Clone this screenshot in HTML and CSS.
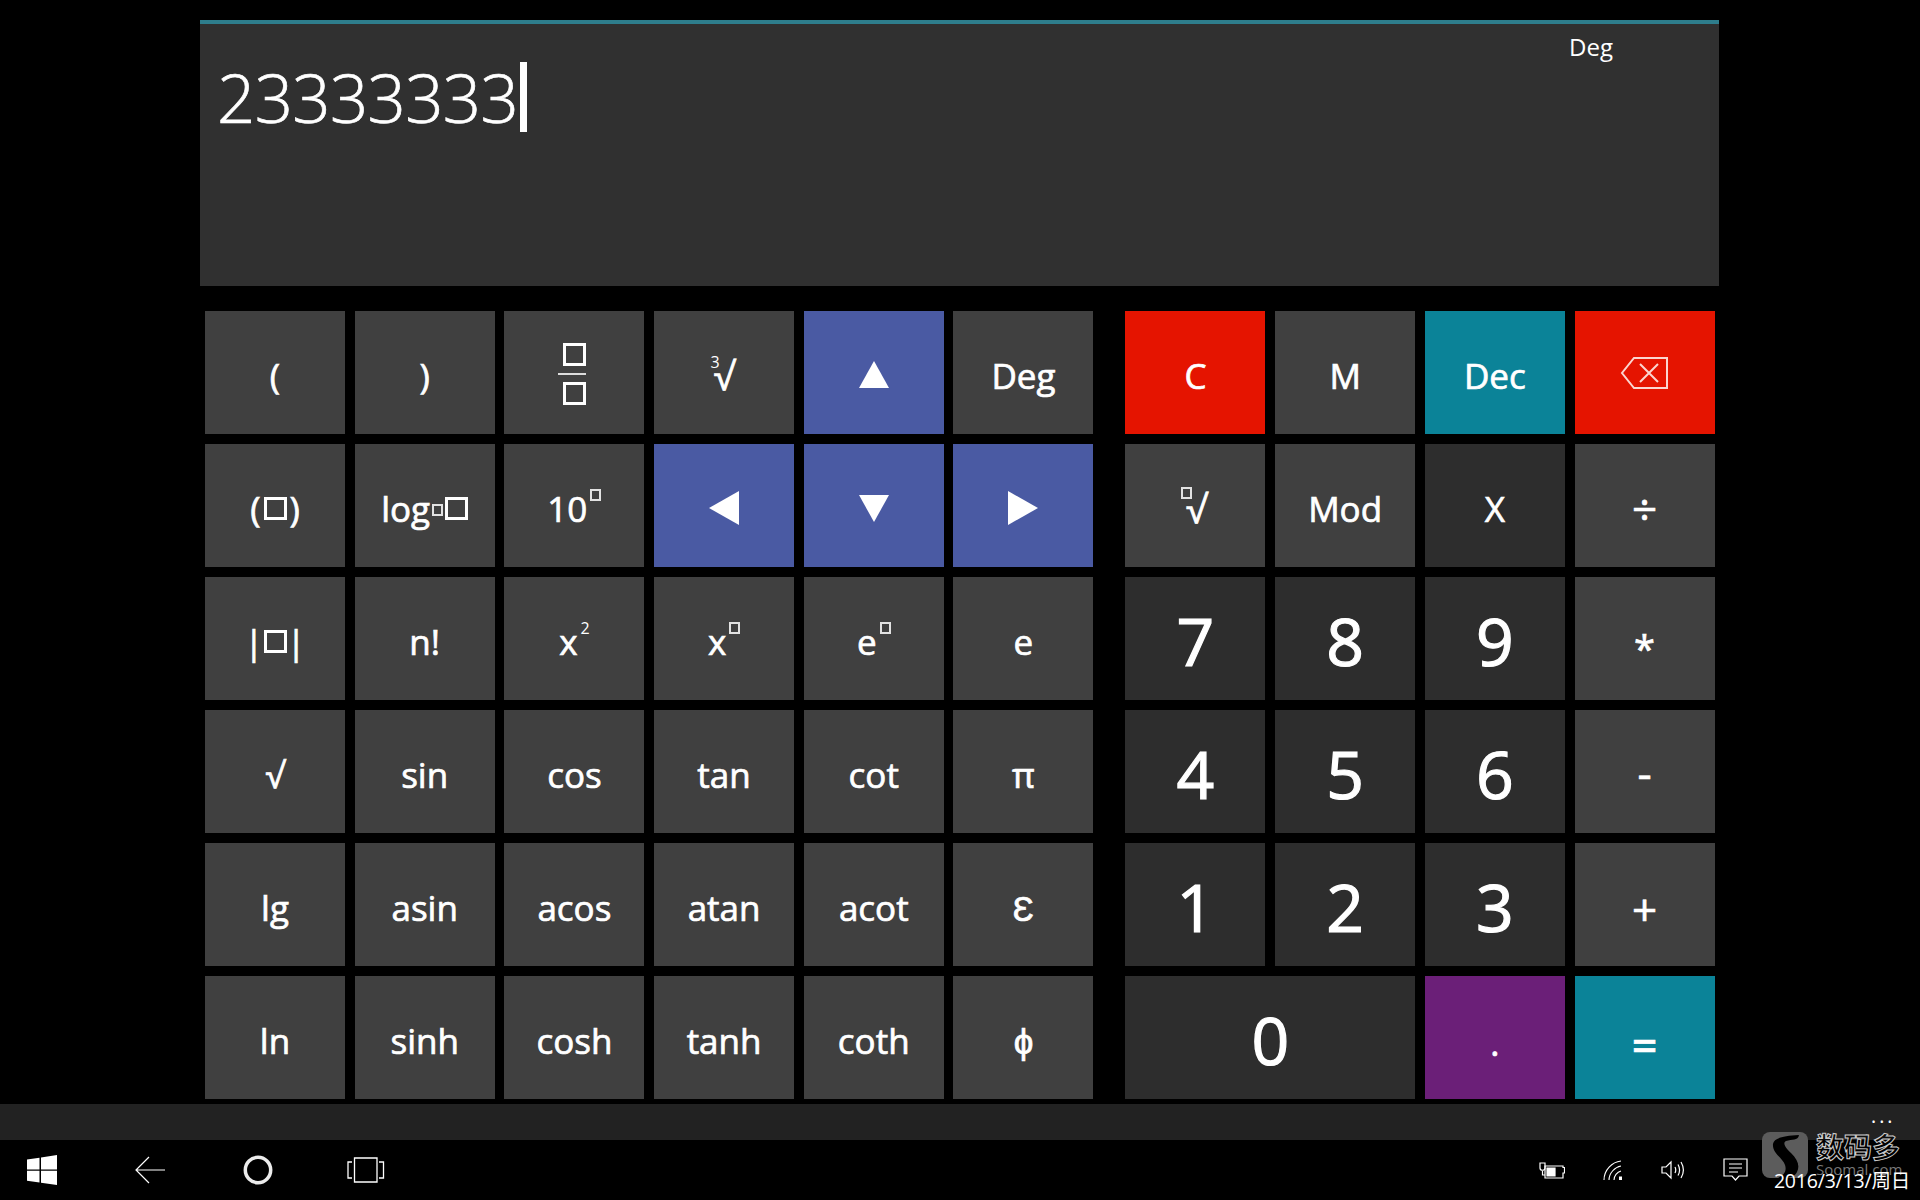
FILE: index.html
```html
<!DOCTYPE html>
<html lang="en">

<head>
    <meta charset="UTF-8">
    <title>Calculator</title>
    <link rel="stylesheet" href="styles.css">
</head>

<body>
    <!--display-->
    <div class="display">
        <div class="entry">23333333<span class="caret"></span></div>
        <div class="mode">Deg</div>
    </div>

    <div class="pad">
        <!--functions-->
        <div class="keys fn">
            <div class="key">(</div>
            <div class="key">)</div>
            <div class="key"><div class="frac"><span class="box"></span><span class="frac-line"></span><span class="box"></span></div></div>
            <div class="key"><span class="root-idx">3</span><span class="rad">√</span></div>
            <div class="key blue"><svg class="tri" width="30" height="28" viewBox="0 0 30 28"><path d="M15 0 30 27H0z"/></svg></div>
            <div class="key">Deg</div>

            <div class="key">(<span class="box spaced"></span>)</div>
            <div class="key">log<span class="box mini low"></span><span class="box"></span></div>
            <div class="key">10<span class="box mini up"></span></div>
            <div class="key blue"><svg class="tri" width="30" height="34" viewBox="0 0 30 34"><path d="M30 0V34L0 17z"/></svg></div>
            <div class="key blue"><svg class="tri" width="30" height="28" viewBox="0 0 30 28"><path d="M0 1H30L15 28z"/></svg></div>
            <div class="key blue"><svg class="tri" width="30" height="34" viewBox="0 0 30 34"><path d="M0 0V34L30 17z"/></svg></div>

            <div class="key">|<span class="box"></span>|</div>
            <div class="key">n!</div>
            <div class="key">x<span class="sup">2</span></div>
            <div class="key">x<span class="box mini up"></span></div>
            <div class="key">e<span class="box mini up"></span></div>
            <div class="key">e</div>

            <div class="key">√</div>
            <div class="key">sin</div>
            <div class="key">cos</div>
            <div class="key">tan</div>
            <div class="key">cot</div>
            <div class="key">π</div>

            <div class="key">lg</div>
            <div class="key">asin</div>
            <div class="key">acos</div>
            <div class="key">atan</div>
            <div class="key">acot</div>
            <div class="key">Ɛ</div>

            <div class="key">ln</div>
            <div class="key">sinh</div>
            <div class="key">cosh</div>
            <div class="key">tanh</div>
            <div class="key">coth</div>
            <div class="key">ϕ</div>
        </div>

        <!--numbers-->
        <div class="keys num">
            <div class="key red">C</div>
            <div class="key">M</div>
            <div class="key teal">Dec</div>
            <div class="key red no-pad">
                <svg width="50" height="36" viewBox="0 0 50 36" fill="none" stroke="#fbd5cf" stroke-width="2"><path d="M47 3H14L2 18 14 33H47z"/><path d="M20 9 38 27M38 9 20 27"/></svg>
            </div>

            <div class="key"><span class="box mini root-box"></span><span class="rad">√</span></div>
            <div class="key">Mod</div>
            <div class="key dark">X</div>
            <div class="key op">÷</div>

            <div class="key dark big">7</div>
            <div class="key dark big">8</div>
            <div class="key dark big">9</div>
            <div class="key op star">*</div>

            <div class="key dark big">4</div>
            <div class="key dark big">5</div>
            <div class="key dark big">6</div>
            <div class="key op minus">-</div>

            <div class="key dark big">1</div>
            <div class="key dark big">2</div>
            <div class="key dark big">3</div>
            <div class="key op plus">+</div>

            <div class="key dark big wide">0</div>
            <div class="key purple">.</div>
            <div class="key teal op equals">=</div>
        </div>
    </div>

    <div class="app-bar"><span class="dots">•••</span></div>

    <!--taskbar-->
    <div class="taskbar">
        <div class="nav">
            <svg width="30" height="30" viewBox="0 0 30 30" fill="#fff"><path d="M0 4.500 12.500 2.700V14.400H0zM14 2.500 30 0V14.400H14zM0 15.800H12.500V27.600L0 25.700zM14 15.800H30V30L14 27.800z"/></svg>
            <svg width="30" height="28" viewBox="0 0 30 28" fill="none" stroke="#fff" stroke-width="1.2"><path d="M30 14H1M14 1 1 14 14 27"/></svg>
            <svg width="30" height="30" viewBox="0 0 30 30" fill="none" stroke="#ececec" stroke-width="3.5"><circle cx="15" cy="15" r="12.700"/></svg>
            <svg class="task-view" width="38" height="26" viewBox="0 0 38 26" fill="none" stroke="#fff" stroke-width="1.3"><path d="M7.500 1H30V25H7.500zM5 5H1V21H5M32 5H36.500V21H32"/></svg>
        </div>
        <div class="tray">
            <svg width="26" height="20" viewBox="0 0 26 20" fill="none" stroke="#fff" stroke-width="1.2"><path d="M6 6H24V7.500H25.500V13H24V18H6z"/><path fill="#fff" d="M8 8H16V16H8z"/><path d="M1 3V8C1 11 6 11 6 8V3ZM3.500 11V15H6"/></svg>
            <svg width="20" height="20" viewBox="0 0 20 20" fill="none" stroke="#fff" stroke-width="1.1"><path d="M1 20C1 10 9 2 18 1M6 20C6 13 12 7 18 6M11 20C11 16 14 12 18 11"/><path fill="#fff" stroke="none" d="M16 16.500H19V20H16z"/></svg>
            <svg width="24" height="20" viewBox="0 0 24 20" fill="none" stroke="#fff" stroke-width="1.2"><path d="M1 7H5L10 2V18L5 13H1z"/><path d="M14 7C15 9 15 11 14 13M17 4.500C19 8 19 12 17 15.500M20 2C23 7 23 13 20 18"/></svg>
            <svg width="25" height="24" viewBox="0 0 25 24" fill="none" stroke="#fff" stroke-width="1.2"><path d="M1 1H24V18H16L12.500 22 9 18H1z"/><path d="M6 6H19M6 10H19M6 14H15"/></svg>
            <div class="date">2016/3/13/周日</div>
        </div>
    </div>

    <!--watermark-->
    <div class="mark">
        <div class="mark-logo">
            <svg width="46" height="46" viewBox="0 0 46 46"><path fill="#000" d="M11 12C12 6 20 4 37 3 36 9 30 7 24 9 20 11 24 16 29 21 36 28 38 34 35 40 33 44 28 46 22 46H16C22 43 25 39 23 33 21 26 10 21 11 12z"/></svg>
        </div>
        <div class="mark-text">
            <div class="mark-cn">数码多</div>
            <div class="mark-en">Soomal.com</div>
        </div>
    </div>
</body>

</html>
```
FILE: styles.css
```css
html,
body {
    margin: 0;
    height: 100%;
}

body {
    position: relative;
    width: 1920px;
    height: 1200px;
    overflow: hidden;
    background: #000;
    color: #fff;
    font-family: "Open Sans", "Noto Sans CJK SC", sans-serif;
}

/*display*/
.display {
    display: flex;
    justify-content: space-between;
    box-sizing: border-box;
    width: 1519px;
    height: 266px;
    margin: 20px 0 0 200px;
    padding: 33px 106px 0 17px;
    background: #303030;
    border-top: 4px solid #2e7d8c;
}

.entry {
    display: flex;
    align-items: flex-start;
    height: 80px;
    font-size: 67px;
    font-weight: 300;
    line-height: 80px;
    letter-spacing: -0.6px;
    -webkit-text-stroke: 0.7px #fff;
}

.caret {
    width: 7px;
    height: 70px;
    margin: 5px 0 0 2px;
    background: #fff;
}

.mode {
    margin-top: -27px;
    font-size: 24px;
    line-height: 34px;
}

/*keypad*/
.pad {
    display: flex;
    gap: 32px;
    margin: 25px 0 0 205px;
}

.keys {
    display: grid;
    grid-auto-rows: 123px;
    row-gap: 10px;
    column-gap: 9.7px;
}

.fn {
    grid-template-columns: repeat(6, 140px);
}

.num {
    grid-template-columns: repeat(4, 140px);
}

.key {
    display: flex;
    align-items: center;
    justify-content: center;
    padding-top: 5px;
    box-sizing: border-box;
    background: #404040;
    font-size: 35px;
    font-weight: 400;
    line-height: 1;
    -webkit-text-stroke: 0.7px #fff;
}

.blue {
    padding-top: 4px;
    background: #4a5aa3;
}

.red {
    background: #e51400;
}

.teal {
    background: #0b8398;
}

.purple {
    padding-top: 10px;
    background: #6b1f78;
}

.dark {
    background: #2d2d2d;
}

.big {
    padding-top: 3px;
    font-size: 66px;
    -webkit-text-stroke: 1.2px #fff;
}

.wide {
    grid-column: span 2;
}

.op {
    font-size: 44px;
}

.star {
    padding-top: 18px;
    font-size: 38px;
}

.minus {
    padding-top: 1px;
}

.plus {
    padding-top: 8px;
}

.equals {
    padding-top: 12px;
    font-weight: 600;
}

.no-pad {
    padding-top: 0;
}

.tri {
    fill: #fff;
}

/*small boxes for the formula keys*/
.box {
    display: inline-block;
    box-sizing: border-box;
    width: 23px;
    height: 23px;
    border: 3px solid #fff;
}

.box.spaced {
    margin: 0 3px;
}

.box.mini {
    width: 11px;
    height: 12px;
    border-width: 2px;
    opacity: 0.85;
}

.box.up {
    margin: -27px 0 0 3px;
}

.box.low {
    margin: 4px 2px 0;
}

.box.root-box {
    margin: -30px -6px 0 0;
}

.sup {
    margin: -27px 0 0 3px;
    font-size: 16px;
    -webkit-text-stroke: 0;
}

.rad {
    margin-right: 3px;
    font-size: 38px;
}

.root-idx {
    margin: -26px -6px 0 0;
    font-size: 16px;
    -webkit-text-stroke: 0;
}

.frac {
    display: flex;
    flex-direction: column;
    align-items: flex-end;
    gap: 7px;
    margin: -2px 4px 0 0;
}

.frac-line {
    width: 28px;
    height: 2px;
    background: #ddd;
}

.app-bar {
    display: flex;
    justify-content: flex-end;
    box-sizing: border-box;
    height: 36px;
    margin-top: 5px;
    padding-right: 24px;
    background: #222;
}

.dots {
    font-size: 11px;
    letter-spacing: 4px;
    line-height: 36px;
}

/*taskbar*/
.taskbar {
    display: flex;
    justify-content: space-between;
    align-items: center;
    height: 60px;
    padding: 0 10px 0 27px;
}

.nav {
    display: flex;
    align-items: center;
    gap: 78px;
}

.task-view {
    margin-left: -4px;
}

.tray {
    display: flex;
    align-self: stretch;
    align-items: center;
    gap: 38px;
}

.date {
    position: relative;
    z-index: 2;
    align-self: flex-end;
    margin: 0 0 7px -12px;
    font-size: 19.5px;
    line-height: 24px;
    letter-spacing: -0.2px;
}

/*watermark, sits over the taskbar*/
.mark {
    position: absolute;
    left: 1762px;
    top: 1132px;
    display: flex;
    gap: 8px;
}

.mark-logo {
    width: 46px;
    height: 46px;
    border-radius: 8px;
    background: #5c5c5c;
    overflow: hidden;
}

.mark-cn {
    color: rgba(0, 0, 0, 0.6);
    -webkit-text-stroke: 1px #ccc;
    font-size: 28px;
    font-weight: 700;
    line-height: 30px;
}

.mark-en {
    color: #777;
    font-size: 15px;
    line-height: 14px;
}
```
